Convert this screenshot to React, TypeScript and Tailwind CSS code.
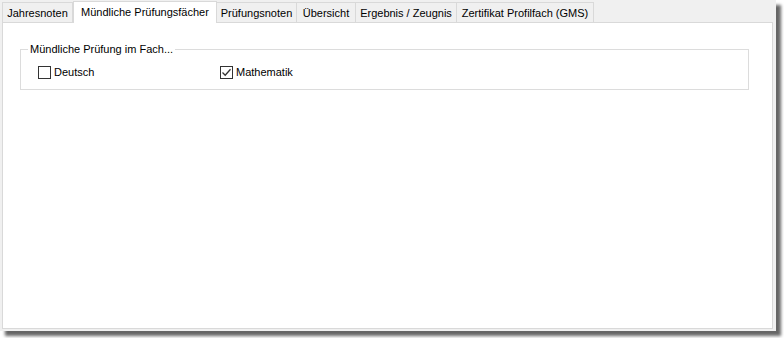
import React from "react";

const tabs = [
  { label: "Jahresnoten", w: 71 },
  { label: "Mündliche Prüfungsfächer", w: 144, active: true },
  { label: "Prüfungsnoten", w: 81 },
  { label: "Übersicht", w: 60 },
  { label: "Ergebnis / Zeugnis", w: 102 },
  { label: "Zertifikat Profilfach (GMS)", w: 138 },
];

function CheckBox({ checked, label }: { checked?: boolean; label: string }) {
  return (
    <label className="flex items-center gap-[3px]">
      <span className="w-[13px] h-[13px] border border-[#333333] bg-white flex items-center justify-center">
        {checked && (
          <svg width="11" height="11" viewBox="0 0 11 11">
            <path d="M1.5 5.5 L4.2 8.2 L9.5 2.2" fill="none" stroke="#333333" strokeWidth="1.3" />
          </svg>
        )}
      </span>
      <span>{label}</span>
    </label>
  );
}

export default function App() {
  return (
    <div
      className="w-[784px] h-[338px] bg-white text-[11px] text-black whitespace-nowrap"
      style={{ fontFamily: '"Liberation Sans", Arial, sans-serif' }}
    >
      <div className="w-[776px] h-[331px] bg-[#f0f0f0] flex flex-col shadow-[5px_5px_3px_rgba(0,0,0,0.6)]">
        {/* tab strip */}
        <div className="flex items-end h-[22px] pl-[2px]">
          {tabs.map((t) =>
            t.active ? (
              <div
                key={t.label}
                style={{ width: t.w }}
                className="h-[22px] -mb-px z-10 bg-white border border-b-0 border-[#d9d9d9] flex items-center justify-center pb-[1px]"
              >
                {t.label}
              </div>
            ) : (
              <div
                key={t.label}
                style={{ width: t.w }}
                className="h-[20px] bg-[#f0f0f0] border border-b-0 border-[#d9d9d9] -ml-px first:ml-0 flex items-center justify-center pt-[2px]"
              >
                {t.label}
              </div>
            )
          )}
        </div>

        {/* tab page */}
        <div className="ml-[2px] mr-[3px] h-[307px] bg-white border border-[#d9d9d9] pt-[19px] pl-[17px] pr-[23px]">
          <fieldset className="border border-[#dcdcdc] h-[48px] pl-[17px] pr-2">
            <legend className="px-[2px] ml-[-10px] leading-[14px]">Mündliche Prüfung im Fach...</legend>
            <div className="flex items-center mt-[8px]">
              <div className="w-[182px]">
                <CheckBox label="Deutsch" />
              </div>
              <CheckBox checked label="Mathematik" />
            </div>
          </fieldset>
        </div>
      </div>
    </div>
  );
}
